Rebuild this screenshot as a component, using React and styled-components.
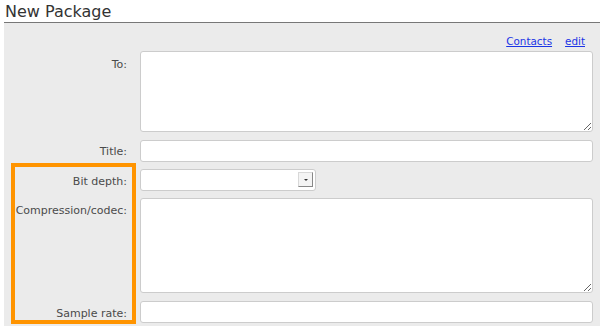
import styled, { createGlobalStyle } from "styled-components"

const Global = createGlobalStyle`
body{
    margin: 0;
    background: #ffffff;
    font-family: "DejaVu Sans", Verdana, sans-serif;
}
`;

const Page = styled.div`
width: 600px;
height: 326px;
overflow: hidden;
position: relative;
`;

const Heading = styled.h1`
margin: 0 0 0 4px;
padding: 3px 0 0 1px;
height: 19px;
font-size: 16px;
font-weight: normal;
line-height: 18px;
color: #333333;
border-bottom: 1px solid #777777;
`;

const Panel = styled.div`
margin-left: 4px;
background-color: #ebebeb;
padding: 11px 7px 20px 0;
height: 100%;
`;

const LinkBar = styled.div`
display: flex;
justify-content: flex-end;
gap: 13px;
padding-right: 8px;
height: 17px;
font-size: 10.4px;
line-height: 14px;
a{
    color: #1b35e6;
    text-decoration: underline;
}
`;

const Form = styled.div`
display: grid;
grid-template-columns: 136px 1fr;
row-gap: 7px;
align-items: start;
`;

const Label = styled.label`
text-align: right;
padding-right: 13px;
padding-top: ${p => p.$top || 6}px;
font-size: 11px;
line-height: 13px;
color: #4a4a4a;
`;

const TextArea = styled.textarea`
box-sizing: border-box;
display: block;
width: 100%;
height: ${p => p.$h}px;
margin: 0;
border: 1px solid #cccccc;
border-radius: 3px;
background: #ffffff;
resize: vertical;
font-family: inherit;
`;

const Input = styled.input`
box-sizing: border-box;
display: block;
width: 100%;
height: 22px;
margin: 1px 0 0;
border: 1px solid #cccccc;
border-radius: 3px;
background: #ffffff;
`;

const Select = styled.div`
box-sizing: border-box;
position: relative;
width: 176px;
height: 22px;
border: 1px solid #cccccc;
border-radius: 3px;
background: #ffffff;
`;

const SelectButton = styled.span`
position: absolute;
right: 2px;
top: 2px;
width: 15px;
height: 15px;
box-sizing: border-box;
border: 1px solid #d8d8d8;
border-right-color: #888888;
border-bottom-color: #888888;
background: #f4f4f4;
display: flex;
align-items: center;
justify-content: center;
&::after{
    content: "";
    border-left: 2px solid transparent;
    border-right: 2px solid transparent;
    border-top: 2px solid #333333;
}
`;

const Highlight = styled.div`
position: absolute;
left: 11px;
top: 163px;
width: 125px;
height: 161px;
box-sizing: border-box;
border: 4px solid #ff9400;
pointer-events: none;
`;

export default function App(){
    return(
        <Page>
            <Global />
            <Heading>New Package</Heading>
            <Panel>
                <LinkBar>
                    <a href="#contacts">Contacts</a>
                    <a href="#edit">edit</a>
                </LinkBar>
                <Form>
                    <Label $top={7}>To:</Label>
                    <TextArea $h={81} />
                    <Label>Title:</Label>
                    <Input />
                    <Label>Bit depth:</Label>
                    <Select><SelectButton /></Select>
                    <Label>Compression/codec:</Label>
                    <TextArea $h={95} />
                    <Label $top={7}>Sample rate:</Label>
                    <Input />
                </Form>
            </Panel>
            <Highlight />
        </Page>
    )
}
